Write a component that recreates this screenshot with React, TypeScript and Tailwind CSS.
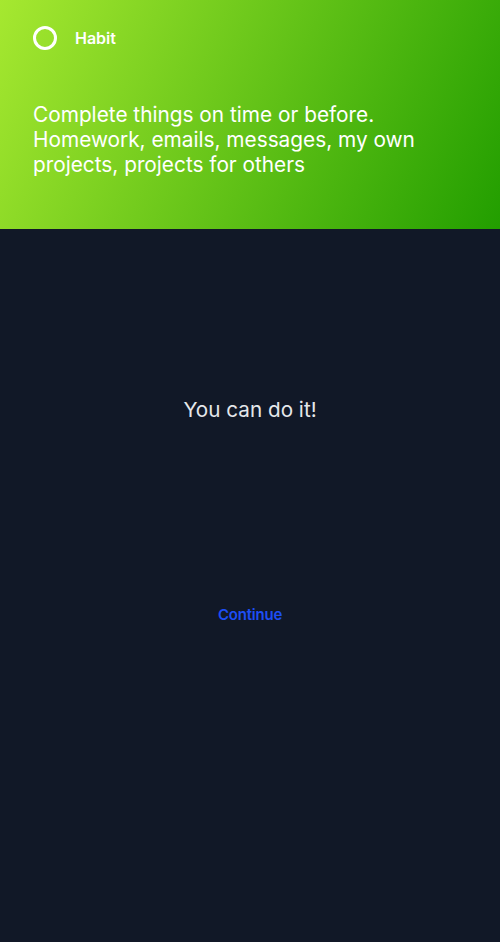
import React from 'react';

const App: React.FC = () => {
  return (
    <div className="min-h-[942px] w-full bg-[#111827] flex flex-col" style={{ fontFamily: 'Inter, "Noto Sans", sans-serif' }}>
      <div className="h-[229px] bg-linear-[115deg] from-[#a6e830] to-[#229e00] px-[33px] pt-[25px]">
        <div className="flex items-center gap-[18px]">
          <div className="w-[24px] h-[24px] rounded-full border-[3px] border-white" />
          <span className="text-white font-semibold text-[16px] leading-[24px] mt-[1px]">Habit</span>
        </div>
        <p className="mt-[52px] text-white text-[20.8px] leading-[25px]">
          Complete things on time or before. Homework, emails, messages, my own projects, projects for others
        </p>
      </div>
      <div className="flex flex-col items-center pt-[167px]">
        <p className="text-[#e5e7eb] text-[20.7px] leading-[28px]">You can do it!</p>
        <button className="mt-[180px] text-[#1d4ef5] font-semibold text-[15px] tracking-[-0.2px]">Continue</button>
      </div>
    </div>
  );
};

export default App;
